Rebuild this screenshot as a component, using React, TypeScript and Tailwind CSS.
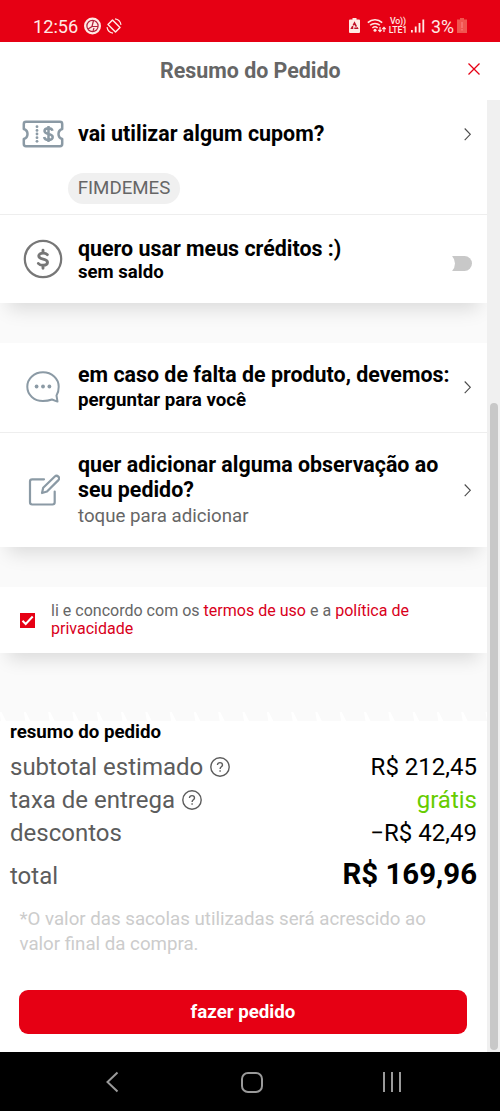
import type { ReactNode } from "react";

const Chevron = () => (
  <svg className="-mt-px h-4 w-3 shrink-0" viewBox="0 0 12 16" fill="none" stroke="#4a4a4a" strokeWidth="1.1">
    <path d="M2.700 2.500 8.300 8.300 2.700 14.100" />
  </svg>
);

const TicketIcon = () => (
  <svg className="mr-0.5" width="42" height="28" viewBox="0 0 42 28" fill="none" stroke="#8b9aa5" strokeWidth="2.500" strokeLinejoin="round">
    <path d="M4 1.800h34q2.200 0 2.200 2.200v5q-3.700 1.200-3.700 5t3.700 5v5q0 2.200-2.200 2.200H4Q1.800 26.200 1.800 24v-5q3.700-1.200 3.700-5T1.800 9V4Q1.800 1.800 4 1.800z" />
    {[6.7, 10.4, 14, 17.7, 21.3].map((y) => <circle key={y} cx="15" cy={y} r="1.4" fill="#8b9aa5" stroke="none" />)}
    <path d="M30.500 10.800c-.4-1.700-1.800-2.500-4-2.500s-4 1-4 2.800c0 4 8.200 1.800 8.200 6 0 1.800-1.600 2.900-4.200 2.900-2.400 0-4-.9-4.400-3M26.500 6v16" strokeWidth="2.500" />
  </svg>
);

const CoinIcon = () => (
  <svg className="mr-px" width="40" height="40" viewBox="0 0 40 40" fill="none" stroke="#777" strokeLinecap="round">
    <circle cx="20" cy="20" r="18.200" strokeWidth="2.200" />
    <path d="M24.300 15.700c-.8-1-2.200-1.600-4.200-1.600-2.700 0-4.300 1.100-4.300 2.900 0 4.300 8.700 1.900 8.700 6.300 0 1.900-1.700 3-4.400 3-2.200 0-3.800-.6-4.700-1.800M20 11.200v2.600M20 26.600v2.600" strokeWidth="2.900" />
  </svg>
);

const ChatIcon = () => (
  <svg className="-mt-0.5 mr-px" width="34" height="32" viewBox="0 0 34 32" fill="none" stroke="#8b9aa5" strokeWidth="2" strokeLinecap="round" strokeLinejoin="round">
    <path d="M30.500 24.500 31.500 30.600 26 28.500c-2.700 1-5.800 1.500-9.100 1.500C8.200 30 1.300 23.800 1.300 15.700S8.200 1.300 17 1.300s15.700 6.300 15.700 14.400c0 3.600-.6 6.400-2.200 8.800z" />
    {[10.600, 17, 23.400].map((x) => <circle key={x} cx={x} cy="15.500" r="1.900" fill="#8b9aa5" stroke="none" />)}
  </svg>
);

const EditIcon = () => (
  <svg width="32" height="32" viewBox="0 0 32 32" fill="none" stroke="#8b9aa5" strokeWidth="2.200" strokeLinecap="round" strokeLinejoin="round">
    <path d="M16 5.300H4.200Q2 5.300 2 7.500v20.800q0 2.200 2.200 2.200h20.300q2.200 0 2.200-2.200V17.500" />
    <path d="M14 19l1.200-5.200L26.800 2.500a2.550 2.550 0 0 1 3.600 3.600L19 17.500z" />
  </svg>
);

const HelpIcon = () => (
  <svg width="20" height="20" viewBox="0 0 20 20" fill="none" stroke="#5c5c5c" strokeWidth="1.400">
    <circle cx="10" cy="10" r="9.200" />
    <path d="M7.500 8.100c0-1.600 1-2.500 2.500-2.500s2.500.9 2.500 2.300c0 1.800-2.400 1.900-2.400 4M10.100 13.200v1.500" strokeWidth="1.400" />
  </svg>
);

const StatusBar = () => (
  <div className="flex h-[42px] shrink-0 items-start bg-[#e60014] pr-[33px] pl-[33px] pt-[15px] text-[#ffe9e4]">
    <span className="w-[45px] text-[18.200px] leading-[23px]">12:56</span>
    <svg className="ml-1.5 mt-[2px]" width="17" height="18" viewBox="0 0 17 18">
      <circle cx="8.500" cy="9" r="8.500" fill="#ffe9e4" />
      <circle cx="8.500" cy="9" r="5.600" fill="none" stroke="#b3203c" strokeWidth="1.200" />
      <path d="M9.500 3.500 8 9.500 4 12M8 9.500h6M9 14l1-3" fill="none" stroke="#b3203c" strokeWidth="1.200" />
    </svg>
    <svg className="ml-[5px] mt-[3px]" width="16" height="16" viewBox="0 0 16 16" fill="none" stroke="#ffe9e4" strokeWidth="1.200">
      <path d="M6.500 2 14 9.500 9.500 14 2 6.500z" strokeWidth="1.500" strokeLinejoin="round" />
      <path d="M9 .8a7.200 7.200 0 0 1 6 6M7 15.200a7.200 7.200 0 0 1-6-6" />
    </svg>
    <div className="ml-auto flex items-start">
      <svg className="mt-[3px]" width="11" height="15" viewBox="0 0 11 15">
        <path d="M3.500 0h4v1.600H10q1 0 1 1V14q0 1-1 1H1q-1 0-1-1V2.600q0-1 1-1h2.500z" fill="#ffe9e4" />
        <path d="M5.500 5 8.300 10.300H2.700z" fill="none" stroke="#c01028" strokeWidth="1.600" strokeDasharray="4 1" />
      </svg>
      <svg className="ml-[7px] mt-[3px]" width="20" height="15" viewBox="0 0 20 15" fill="none" stroke="#ffe9e4" strokeWidth="1.500">
        <path d="M.8 4.600a10.800 10.800 0 0 1 14.400 0M3.100 7.300a7.300 7.300 0 0 1 9.800 0M5.400 10a3.900 3.900 0 0 1 5.200 0" />
        <circle cx="8" cy="12.300" r="1.500" fill="#ffe9e4" stroke="none" />
        <path d="M13 9v4.500m-1.700-1.700 1.700 1.900 1.700-1.900M17 14V9.500m-1.700 1.700L17 9.300l1.700 1.900" strokeWidth="1.200" />
      </svg>
      <div className="ml-[2px] mt-[2px] flex w-[18px] flex-col items-center text-[8.800px] leading-[8.500px] font-medium tracking-[-0.2px] whitespace-nowrap">
        <span>Vo))</span>
        <span>LTE1</span>
      </div>
      <svg className="ml-[4px] mt-1" width="14" height="14" viewBox="0 0 14 14" fill="#ffe9e4">
        <path d="M0 11h1.800v2.500H0zM3.800 7.500h1.800v6H3.800zM7.600 4h1.800v9.500H7.600zM11.400.5h1.800v13h-1.800z" />
      </svg>
      <span className="ml-[6px] text-[17.800px] leading-[23px]">3%</span>
      <svg className="ml-[3px] mt-[3px]" width="10" height="15" viewBox="0 0 10 15">
        <path d="M3 0h4v1.500h3V15H0V1.500h3z" fill="#f0554f" />
        <path d="M5 4v6M5 11v1.500" stroke="#f88" strokeWidth="1" />
      </svg>
    </div>
  </div>
);

const Card = ({ children, className = "" }: { children: ReactNode; className?: string }) => (
  <section className={`relative shrink-0 bg-white shadow-[0_14px_18px_-8px_rgba(0,0,0,0.13)] ${className}`}>{children}</section>
);

const Row = ({ icon, children, className = "" }: { icon: ReactNode; children: ReactNode; className?: string }) => (
  <div className={`flex items-center pr-[13px] ${className}`}>
    <span className="flex w-[78px] shrink-0 justify-center pr-2 pl-[17px]">{icon}</span>
    {children}
  </div>
);

const Line = ({ label, value, help, valueClass = "text-black" }: { label: string; value: string; help?: boolean; valueClass?: string }) => (
  <div className="flex h-[33px] items-center justify-between text-[24px] text-[#5c5c5c]">
    <span className="flex items-center gap-[7px]">{label}{help && <HelpIcon />}</span>
    <span className={valueClass}>{value}</span>
  </div>
);

export default function App() {
  return (
    <div className="flex h-[1111px] w-[500px] flex-col overflow-hidden bg-white font-['Roboto',sans-serif] text-black">
      <StatusBar />
      <header className="flex h-[58px] shrink-0 items-center pl-[160px] pr-5">
        <h1 className="mt-px text-[21.400px] font-bold whitespace-nowrap text-[#666]">Resumo do Pedido</h1>
        <svg className="mb-1 ml-auto" width="12" height="12" viewBox="0 0 12 12" stroke="#e60014" strokeWidth="1.300">
          <path d="M.5.500l11 11M11.500.500l-11 11" />
        </svg>
      </header>
      <div className="flex h-[952px] shrink-0">
        <main className="flex w-[487px] flex-col overflow-hidden bg-[#fafafa]">
          <Card>
            <div className="h-[115px] border-b border-[#eee]">
              <Row className="h-[68px]" icon={<TicketIcon />}>
                <p className="flex-1 text-[21.400px] font-bold whitespace-nowrap">vai utilizar algum cupom?</p>
                <Chevron />
              </Row>
              <span className="ml-[68px] mt-[5px] flex h-[31px] w-28 items-center justify-center rounded-full bg-[#f0f0f0] text-[18.700px] text-[#666]">FIMDEMES</span>
            </div>
            <Row className="h-[88px]" icon={<CoinIcon />}>
              <div className="flex-1 whitespace-nowrap">
                <p className="text-[21.400px] leading-[25px] font-bold">quero usar meus créditos :)</p>
                <p className="text-[18.600px] leading-[22px] font-bold">sem saldo</p>
              </div>
              <span className="relative mt-[9px] mr-[2px] h-[15px] w-[26px] rounded-full bg-[#c8c8c8]">
                <span className="absolute -top-[3px] -left-[12px] h-[21px] w-[21px] rounded-full bg-white" />
              </span>
            </Row>
          </Card>
          <Card className="mt-10">
            <Row className="h-[90px] border-b border-[#eee]" icon={<ChatIcon />}>
              <div className="-mt-px flex-1 whitespace-nowrap">
                <p className="text-[21.400px] leading-[25px] font-bold">em caso de falta de produto, devemos:</p>
                <p className="text-[18.700px] leading-[26px] font-bold">perguntar para você</p>
              </div>
              <Chevron />
            </Row>
            <Row className="h-[114px]" icon={<EditIcon />}>
              <div className="flex-1 whitespace-nowrap">
                <p className="text-[21.400px] leading-[25px] font-bold">quer adicionar alguma observação ao<br />seu pedido?</p>
                <p className="-mb-px pt-px text-[18.700px] leading-[26px] text-[#666]">toque para adicionar</p>
              </div>
              <Chevron />
            </Row>
          </Card>
          <Card className="mt-10 flex h-[66px] items-center pl-5">
            <svg width="15" height="15" viewBox="0 0 15 15">
              <path d="M0 0h15v15H0z" fill="#e60014" />
              <path d="M2.500 7.800 5.700 11l7-7.500" fill="none" stroke="#fff" strokeWidth="2" />
            </svg>
            <p className="ml-4 text-[16.050px] leading-[18.500px] whitespace-nowrap text-[#666]">
              li e concordo com os <a className="text-[#d9001b]">termos de uso</a> e a <a className="text-[#d9001b]">política de<br />privacidade</a>
            </p>
          </Card>
          <svg className="mt-[59px] h-[9px] w-full shrink-0" viewBox="0 0 487 9" fill="#fff">
            {Array.from({ length: 21 }, (_, i) => <path key={i} d={`M${i * 24.300 - 0.500} 0h2l4.500 9h-5z`} />)}
          </svg>
          <section className="flex-1 bg-white px-[10px]">
            <h2 className="h-[29px] text-[18.700px] leading-[22px] font-bold">resumo do pedido</h2>
            <Line label="subtotal estimado" value="R$ 212,45" help />
            <Line label="taxa de entrega" value="grátis" valueClass="text-[#66cc00]" help />
            <Line label="descontos" value="−R$ 42,49" />
            <div className="flex h-[53px] items-center justify-between text-[24px] text-[#5c5c5c]">
              <span>total</span>
              <span className="-mt-[3px] text-[29.400px] font-bold text-black">R$ 169,96</span>
            </div>
            <p className="ml-[9.500px] mt-[5px] text-[18.700px] leading-[25px] whitespace-nowrap text-[#ccc]">
              *O valor das sacolas utilizadas será acrescido ao<br />valor final da compra.
            </p>
            <button className="mt-[33px] ml-[9px] h-[44px] w-[448px] rounded-[9px] bg-[#e60014] pt-px text-[18.700px] font-bold text-white">fazer pedido</button>
          </section>
        </main>
        <div className="w-[13px] bg-[#f0f0f0] pl-[3px] pt-[303px]">
          <div className="h-[647px] w-2 rounded-full bg-[#c8c8c8]" />
        </div>
      </div>
      <nav className="flex h-[59px] shrink-0 items-center bg-black pl-[104px] pt-px">
        <svg width="16" height="22" viewBox="0 0 16 22" fill="none" stroke="#9a9a9a" strokeWidth="2">
          <path d="M13.500 1.500 3.500 11l10 9.500" />
        </svg>
        <span className="ml-[121px] h-[21px] w-[22px] rounded-[7px] border-2 border-[#9a9a9a]" />
        <span className="ml-5 flex h-5 gap-1.5 pl-[100px]">
          <i className="w-0.5 bg-[#9a9a9a]" />
          <i className="w-0.5 bg-[#9a9a9a]" />
          <i className="w-0.5 bg-[#9a9a9a]" />
        </span>
      </nav>
    </div>
  );
}
